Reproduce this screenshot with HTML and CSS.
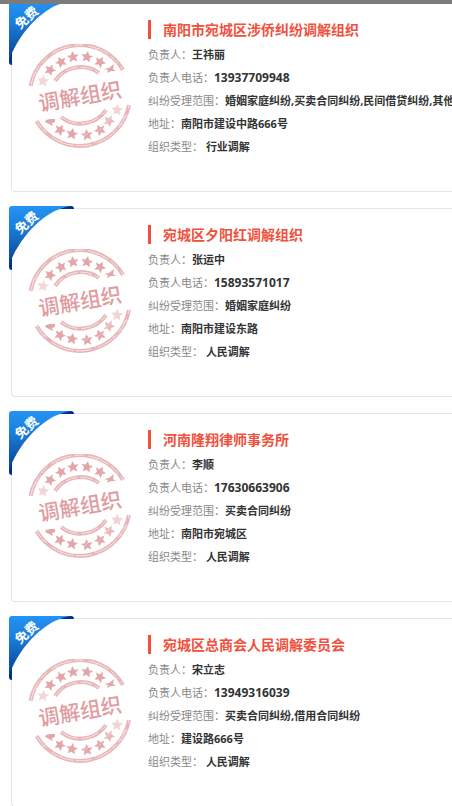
FILE: index.html
```html
<!DOCTYPE html>
<html lang="zh-CN">
<head>
  <meta charset="UTF-8">
  <meta name="viewport" content="width=device-width, initial-scale=1.0">
  <title>调解组织</title>
  <link rel="stylesheet" href="styles.css">
</head>
<body>
  <!-- Shared artwork for the cards -->
  <svg class="sprite" aria-hidden="true">
    <defs>
      <linearGradient id="ribbonFill" x1="0" y1="0" x2="0" y2="1">
        <stop offset="0" stop-color="#2393f5"/>
        <stop offset="0.35" stop-color="#1c7fdc"/>
        <stop offset="1" stop-color="#03408a"/>
      </linearGradient>
      <path id="star" d="M0-6 1.8-2.1 5.9-1.9 2.8.9 3.7 5 0 2.9-3.7 5-2.8.9-5.900-1.900-1.800-2.100Z"/>
    </defs>
    <symbol id="ribbon" viewBox="0 0 65 64">
      <path fill="#02308a" d="M50 0H62Q65 0 65 3H50ZM0 48H3V64Q0 64 0 61Z"/>
      <path fill="url(#ribbonFill)" d="M0 3Q0 0 3 0H61Q56 1 51 3C38 7 16 24 3 52Q1 56 0 60Z"/>
    </symbol>
    <symbol id="stamp" viewBox="0 0 104 104">
      <g fill="none" stroke="#e8b6b8" stroke-width="4">
        <path d="M2.600 42A50 50 0 0 1 95 26"/>
        <path d="M8.600 77A50 50 0 0 0 101 61"/>
        <path d="M27 37A31 31 0 0 1 71 29"/>
        <path d="M33 73A31 31 0 0 0 78 66"/>
      </g>
      <g fill="none" stroke="#f8e4e5" stroke-width="1">
        <path d="M2.600 42A50 50 0 0 1 95 26" stroke-dasharray="22 3 9 5"/>
        <path d="M8.600 77A50 50 0 0 0 101 61" stroke-dasharray="16 6 24 2"/>
        <path d="M27 37A31 31 0 0 1 71 29" stroke-dasharray="12 3"/>
        <path d="M33 73A31 31 0 0 0 78 66" stroke-dasharray="18 4"/>
      </g>
      <g fill="#e3a7aa">
        <use href="#star" transform="translate(15 37) rotate(-65)" opacity="0.45"/>
        <use href="#star" transform="translate(22 26) rotate(-48)"/>
        <use href="#star" transform="translate(33 18) rotate(-28)"/>
        <use href="#star" transform="translate(45 13) rotate(-8)"/>
        <use href="#star" transform="translate(59 13) rotate(10)"/>
        <use href="#star" transform="translate(72 18) rotate(30)"/>
        <path d="M76 25 81 24 86 20 85 25 88 27 83 27 79 29 80 26Z"/>
        <path d="M18 76 22 75 27 75 27 78 24 79 25 82 21 80 17 78Z"/>
        <use href="#star" transform="translate(32 86) rotate(28)"/>
        <use href="#star" transform="translate(44 90) rotate(10)"/>
        <use href="#star" transform="translate(59 91) rotate(-8)"/>
        <use href="#star" transform="translate(72 86) rotate(-28)"/>
        <use href="#star" transform="translate(81 77) rotate(-48)" opacity="0.8"/>
        <use href="#star" transform="translate(89 66) rotate(-68)" opacity="0.5"/>
      </g>
      <!-- worn spots in the ink -->
      <g fill="none" stroke="#fff" stroke-linecap="round" opacity="0.4">
        <path d="M5 32l4-3M12 21l3 3M27 6l3 4M70 4l-3 3M90 19l-3 2M99 72l-5 2M95 82l-5-3M86 89l-4-5M68 99l-2-4M33 98l3-4M15 87l4-2M77 80l5-6M70 88l4-4M56 92l4-3"/>
      </g>
    </symbol>
  </svg>

  <div class="topbar"></div>
  <main class="org-list">
    <article class="org-card">
      <svg class="ribbon" viewBox="0 0 65 64">
        <use href="#ribbon"/>
        <text class="ribbon-text" x="18" y="21" transform="rotate(-42 18 17)">免费</text>
      </svg>
      <svg class="stamp" viewBox="0 0 104 104">
        <use href="#stamp"/>
        <text class="stamp-text" x="52" y="60" transform="rotate(-10 52 52)">调解组织</text>
      </svg>
      <div class="org-info">
        <h3>南阳市宛城区涉侨纠纷调解组织</h3>
        <p>负责人：<strong>王祎丽</strong></p>
        <p>负责人电话：<strong class="phone">13937709948</strong></p>
        <p>纠纷受理范围：<strong>婚姻家庭纠纷,买卖合同纠纷,民间借贷纠纷,其他</strong></p>
        <p>地址：<strong>南阳市建设中路666号</strong></p>
        <p>组织类型： <strong>行业调解</strong></p>
      </div>
    </article>

    <article class="org-card">
      <svg class="ribbon" viewBox="0 0 65 64">
        <use href="#ribbon"/>
        <text class="ribbon-text" x="18" y="21" transform="rotate(-42 18 17)">免费</text>
      </svg>
      <svg class="stamp" viewBox="0 0 104 104">
        <use href="#stamp"/>
        <text class="stamp-text" x="52" y="60" transform="rotate(-10 52 52)">调解组织</text>
      </svg>
      <div class="org-info">
        <h3>宛城区夕阳红调解组织</h3>
        <p>负责人：<strong>张运中</strong></p>
        <p>负责人电话：<strong class="phone">15893571017</strong></p>
        <p>纠纷受理范围：<strong>婚姻家庭纠纷</strong></p>
        <p>地址：<strong>南阳市建设东路</strong></p>
        <p>组织类型： <strong>人民调解</strong></p>
      </div>
    </article>

    <article class="org-card">
      <svg class="ribbon" viewBox="0 0 65 64">
        <use href="#ribbon"/>
        <text class="ribbon-text" x="18" y="21" transform="rotate(-42 18 17)">免费</text>
      </svg>
      <svg class="stamp" viewBox="0 0 104 104">
        <use href="#stamp"/>
        <text class="stamp-text" x="52" y="60" transform="rotate(-10 52 52)">调解组织</text>
      </svg>
      <div class="org-info">
        <h3>河南隆翔律师事务所</h3>
        <p>负责人：<strong>李顺</strong></p>
        <p>负责人电话：<strong class="phone">17630663906</strong></p>
        <p>纠纷受理范围：<strong>买卖合同纠纷</strong></p>
        <p>地址：<strong>南阳市宛城区</strong></p>
        <p>组织类型： <strong>人民调解</strong></p>
      </div>
    </article>

    <article class="org-card">
      <svg class="ribbon" viewBox="0 0 65 64">
        <use href="#ribbon"/>
        <text class="ribbon-text" x="18" y="21" transform="rotate(-42 18 17)">免费</text>
      </svg>
      <svg class="stamp" viewBox="0 0 104 104">
        <use href="#stamp"/>
        <text class="stamp-text" x="52" y="60" transform="rotate(-10 52 52)">调解组织</text>
      </svg>
      <div class="org-info">
        <h3>宛城区总商会人民调解委员会</h3>
        <p>负责人：<strong>宋立志</strong></p>
        <p>负责人电话：<strong class="phone">13949316039</strong></p>
        <p>纠纷受理范围：<strong>买卖合同纠纷,借用合同纠纷</strong></p>
        <p>地址：<strong>建设路666号</strong></p>
        <p>组织类型： <strong>人民调解</strong></p>
      </div>
    </article>
  </main>
</body>
</html>
```
FILE: styles.css
```css
* {
  box-sizing: border-box;
  margin: 0;
  padding: 0;
}
body {
  height: 100vh;
  overflow: hidden;
  background: #fff;
  color: #888;
  font-family: "Noto Sans", "Noto Sans CJK SC", sans-serif;
  font-size: 11px;
}
.sprite {
  position: absolute;
  width: 0;
  height: 0;
}
/* Strip that stays over the list */
.topbar {
  position: fixed;
  top: 0;
  left: 0;
  right: 0;
  height: 4px;
  background: #7b7b7b;
  z-index: 2;
}
/* List */
.org-list {
  display: flex;
  flex-direction: column;
  gap: 16px;
  padding: 3px 0 16px 11px;
}
.org-card {
  position: relative;
  display: flex;
  align-items: flex-start;
  gap: 16px;
  padding: 16px 0 33px 16px;
  border: 1px solid #e4e4ec;
  border-right: none;
  border-radius: 4px 0 0 4px;
}
/* Corner ribbon */
.ribbon {
  position: absolute;
  top: -3px;
  left: -3px;
  width: 65px;
  height: 64px;
}
.ribbon-text {
  fill: #fff;
  font-size: 13px;
  font-weight: 700;
  text-anchor: middle;
}
/* Stamp */
.stamp {
  flex: none;
  width: 104px;
  height: 104px;
  margin-top: 24px;
}
.stamp-text {
  fill: #e09c9f;
  font-size: 21px;
  font-weight: 500;
  text-anchor: middle;
}
/* Text */
.org-info {
  flex: 1;
  min-width: 0;
  white-space: nowrap;
}
.org-info h3 {
  margin-bottom: 4px;
  padding-left: 12px;
  border-left: 3px solid #f0503c;
  color: #f0503c;
  font-size: 14px;
  font-weight: 700;
  line-height: 19px;
}
.org-info p {
  overflow: hidden;
  line-height: 23px;
}
.org-info strong {
  color: #333;
  font-weight: 700;
}
.org-info .phone {
  font-size: 12px;
}
```
